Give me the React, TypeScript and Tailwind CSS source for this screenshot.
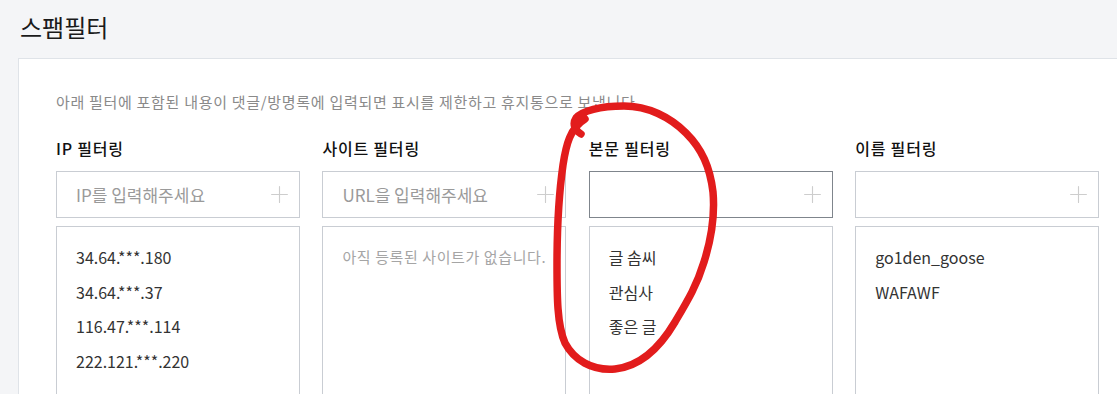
import { Plus } from 'lucide-react'

const font = { fontFamily: '"Noto Sans CJK KR", "Noto Sans", sans-serif' }

type Filter = {
  title: string
  placeholder?: string
  items: string[]
  empty?: string
  active?: boolean
}

const filters: Filter[] = [
  {
    title: 'IP 필터링',
    placeholder: 'IP를 입력해주세요',
    items: ['34.64.***.180', '34.64.***.37', '116.47.***.114', '222.121.***.220'],
  },
  {
    title: '사이트 필터링',
    placeholder: 'URL을 입력해주세요',
    items: [],
    empty: '아직 등록된 사이트가 없습니다.',
  },
  {
    title: '본문 필터링',
    items: ['글 솜씨', '관심사', '좋은 글'],
    active: true,
  },
  {
    title: '이름 필터링',
    items: ['go1den_goose', 'WAFAWF'],
  },
]

function FilterColumn({ f }: { f: Filter }) {
  return (
    <div className="w-[244px] flex flex-col">
      <h3 className="text-[16px] leading-[24px] font-medium tracking-[0.8px] text-[#111] mb-[11px]">{f.title}</h3>
      <div
        className={
          'h-[47px] flex items-center justify-between pl-[19px] pr-[6px] border bg-white ' +
          (f.active ? 'border-[#7f858c]' : 'border-[#c9cdd3]')
        }
      >
        <span className="text-[17px] text-[#9a9a9a]">{f.placeholder ?? ''}</span>
        <Plus size={27} strokeWidth={1} className="text-[#cdcdcd]" />
      </div>
      <div className="mt-[8px] h-[200px] border border-[#c9cdd3] pt-[13px] pl-[19px]">
        {f.items.length === 0 ? (
          <p className="text-[15px] leading-[34px] tracking-[0.6px] text-[#a5a5a5]">{f.empty}</p>
        ) : (
          <ul className="text-[16px] leading-[34.7px] text-[#333]">
            {f.items.map((it) => (
              <li key={it}>{it}</li>
            ))}
          </ul>
        )}
      </div>
    </div>
  )
}

export default function App() {
  return (
    <div className="relative h-[394px] w-[1117px] overflow-hidden bg-[#f4f5f7]" style={font}>
      <h1 className="pl-[20px] pt-[9px] text-[24px] leading-[36px] text-[#1a1a1a]">스팸필터</h1>
      <div className="mt-[13px] ml-[18px] w-[1200px] h-[400px] bg-white border border-[#dfe3e8] pl-[37px] pt-[33px]">
        <p className="text-[15px] leading-[20px] tracking-[0.7px] text-[#8a8a8a]">
          아래 필터에 포함된 내용이 댓글/방명록에 입력되면 표시를 제한하고 휴지통으로 보냅니다.
        </p>
        <div className="mt-[24px] flex gap-[22.4px]">
          {filters.map((f) => (
            <FilterColumn key={f.title} f={f} />
          ))}
        </div>
      </div>

      {/* red pen annotation */}
      <svg className="pointer-events-none absolute left-0 top-0" width="1117" height="394" viewBox="0 0 1117 394">
        <path
          d="M581 134 C 575 130, 572 124, 576 118 C 582 111, 600 106, 624 106 C 648 106, 670 117, 686 133 C 702 149, 710 167, 713 192 C 715 215, 711 240, 704 262 C 697 285, 688 300, 675 322 C 662 344, 643 366, 615 369 C 592 371, 574 360, 565 343 C 557 325, 557 295, 557 265 C 557 235, 558 200, 563 165 C 566 145, 570 128, 585 119"
          fill="none"
          stroke="#e21c1c"
          strokeWidth="7.5"
          strokeLinecap="round"
          strokeLinejoin="round"
        />
      </svg>
    </div>
  )
}
